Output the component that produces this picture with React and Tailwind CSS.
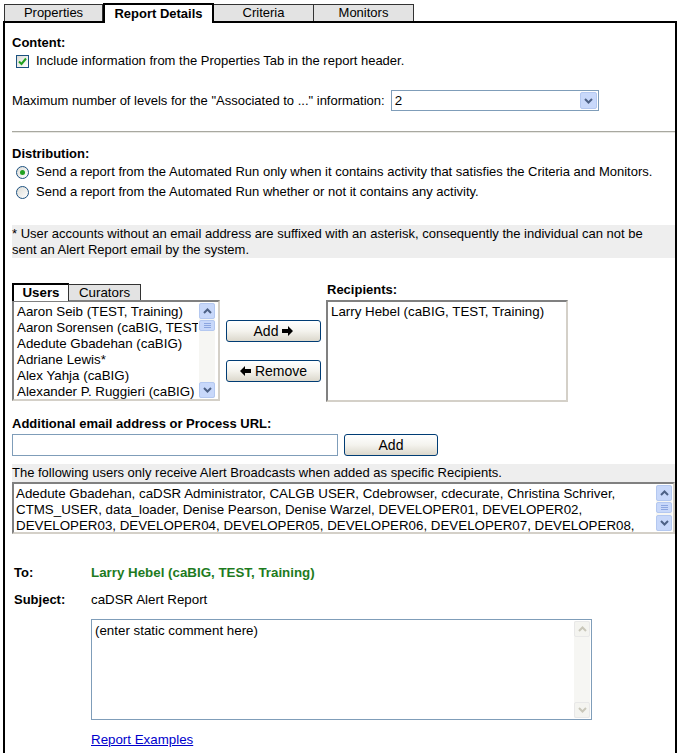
import React from "react";

function Chevron({ up, color = "#4d6185" }) {
  return (
    <svg width="9" height="6" viewBox="0 0 9 6">
      <path
        d={up ? "M1 5 L4.5 1.5 L8 5" : "M1 1 L4.5 4.5 L8 1"}
        stroke={color}
        strokeWidth="2"
        fill="none"
      />
    </svg>
  );
}

function SBtn({ up, disabled }) {
  return (
    <div
      className={
        disabled
          ? "h-[16px] w-full flex items-center justify-center rounded-[2px] border border-[#e8e8e8] bg-[#f4f4f0]"
          : "h-[16px] w-full flex items-center justify-center rounded-[2px] border border-[#b4c8f0] bg-[#c8d8fa]"
      }
    >
      <Chevron up={up} color={disabled ? "#c9c7ba" : "#4d6185"} />
    </div>
  );
}

function ScrollBar({ disabled, thumb = true }) {
  return (
    <div className="w-[16px] h-full flex flex-col bg-[#f6f6f3]">
      <SBtn up disabled={disabled} />
      <div className="flex-1 relative">
        {thumb && !disabled && (
          <div className="absolute left-0 right-0 top-[1px] h-[11px] rounded-[2px] border border-[#b4c8f0] bg-[#c8d8fa] flex flex-col items-center justify-center gap-[1px]">
            <div className="w-[7px] h-[1px] bg-[#8ca6e0]" />
            <div className="w-[7px] h-[1px] bg-[#8ca6e0]" />
            <div className="w-[7px] h-[1px] bg-[#8ca6e0]" />
          </div>
        )}
      </div>
      <SBtn disabled={disabled} />
    </div>
  );
}

function Arrow({ left }) {
  return (
    <svg width="11" height="10" viewBox="0 0 11 10" className="inline-block">
      <path
        d={
          left
            ? "M0 5 L5 0 L5 3 L11 3 L11 7 L5 7 L5 10 Z"
            : "M11 5 L6 0 L6 3 L0 3 L0 7 L6 7 L6 10 Z"
        }
        fill="#000"
      />
    </svg>
  );
}

function XPButton({ children, className }) {
  return (
    <div
      className={
        "flex items-center justify-center gap-[4px] rounded-[3px] border border-[#003c74] bg-gradient-to-b from-[#ffffff] via-[#f4f3ee] to-[#dcd8cc] text-[14px] leading-[16px] " +
        className
      }
    >
      {children}
    </div>
  );
}

const users = [
  "Aaron Seib (TEST, Training)",
  "Aaron Sorensen (caBIG, TEST, Training)",
  "Adedute Gbadehan (caBIG)",
  "Adriane Lewis*",
  "Alex Yahja (caBIG)",
  "Alexander P. Ruggieri (caBIG)",
];

export default function App() {
  return (
    <div className="w-[688px] h-[753px] bg-white overflow-hidden relative text-[13px] leading-[16px] text-black font-['Liberation_Sans',Arial,sans-serif]">
      {/* Tabs */}
      <div className="flex items-end pl-[4px] pt-[3px]">
        <div className="w-[99px] h-[17px] bg-[#e3e3e3] border border-[#333] border-b-0 text-center leading-[16px]">
          Properties
        </div>
        <div className="relative z-10 w-[111px] h-[20px] -mb-[2px] bg-white border-2 border-black border-b-0 text-center font-bold leading-[17px]">
          Report Details
        </div>
        <div className="w-[100px] h-[17px] bg-[#e3e3e3] border border-[#333] border-b-0 border-l-0 text-center leading-[16px]">
          Criteria
        </div>
        <div className="w-[100px] h-[17px] bg-[#e3e3e3] border border-[#333] border-b-0 border-l-0 text-center leading-[16px]">
          Monitors
        </div>
      </div>

      {/* Panel */}
      <div className="ml-[3px] w-[674px] h-[760px] border-2 border-black pl-[7px] pt-[12px] flex flex-col">
        <div className="font-bold">Content:</div>
        <div className="mt-[2px] flex items-center">
          <div className="ml-[4px] w-[13px] h-[13px] border border-[#1c5180] bg-gradient-to-br from-[#dcdcd6] to-[#ffffff] flex items-center justify-center">
            <svg width="9" height="9" viewBox="0 0 9 9">
              <path d="M1 4.5 L3.5 7 L8 1.5" stroke="#21a121" strokeWidth="2" fill="none" />
            </svg>
          </div>
          <span className="ml-[7px]">Include information from the Properties Tab in the report header.</span>
        </div>

        <div className="mt-[21px] flex items-center h-[21px]">
          <span>Maximum number of levels for the "Associated to ..." information:</span>
          <div className="ml-[6px] w-[208px] h-[21px] border border-[#7f9db9] flex items-center">
            <span className="flex-1 pl-[3px] text-[13.33px]">2</span>
            <div className="w-[17px] h-[17px] mr-[1px] rounded-[2px] border border-[#b4c8f0] bg-[#c8d8fa] flex items-center justify-center">
              <Chevron />
            </div>
          </div>
        </div>

        <div className="mt-[20px] h-[2px] border-t border-[#a8a8a0] border-b border-b-[#e8e8e4]" />

        <div className="mt-[13px] font-bold">Distribution:</div>
        <div className="mt-[2px] flex items-center h-[16px]">
          <div className="ml-[4px] w-[13px] h-[13px] rounded-full border border-[#1c5180] bg-gradient-to-br from-[#dcdcd6] to-[#ffffff] flex items-center justify-center">
            <div className="w-[5px] h-[5px] rounded-full bg-[#21a121]" />
          </div>
          <span className="ml-[7px]">
            Send a report from the Automated Run only when it contains activity that satisfies the Criteria and Monitors.
          </span>
        </div>
        <div className="mt-[4px] flex items-center h-[16px]">
          <div className="ml-[4px] w-[13px] h-[13px] rounded-full border border-[#1c5180] bg-gradient-to-br from-[#dcdcd6] to-[#ffffff]" />
          <span className="ml-[7px]">Send a report from the Automated Run whether or not it contains any activity.</span>
        </div>

        <div className="mt-[25px] bg-[#eeeeee] pt-[1px] h-[33px]">
          * User accounts without an email address are suffixed with an asterisk, consequently the individual can not be
          <br />
          sent an Alert Report email by the system.
        </div>

        {/* Users / Recipients */}
        <div className="mt-[24px] flex">
          <div className="w-[208px] flex flex-col">
            <div className="flex items-end h-[18px]">
              <div className="relative z-10 w-[57px] h-[18px] -mb-[1px] bg-white border-2 border-black border-b-0 border-r border-r-[#333] text-center font-bold text-[13.33px] leading-[16px]">
                Users
              </div>
              <div className="w-[72px] h-[16px] bg-[#e3e3e3] border border-[#333] border-b-0 border-l-0 text-center text-[13.33px] leading-[15px]">
                Curators
              </div>
            </div>
            <div className="h-[101px] border-2 border-t-[#808080] border-l-[#808080] border-b-[#d4d0c8] border-r-[#d4d0c8] flex">
              <div className="flex-1 overflow-hidden pl-[3px] pt-[2px] text-[13.33px] leading-[16px] whitespace-nowrap">
                {users.map((u) => (
                  <div key={u}>{u}</div>
                ))}
              </div>
              <div className="py-[1px] pr-[3px] pl-[1px] bg-white">
                <ScrollBar />
              </div>
            </div>
          </div>

          <div className="ml-[6px] w-[95px] flex flex-col pt-[38px]">
            <XPButton className="h-[22px]">
              <span>Add</span>
              <Arrow />
            </XPButton>
            <XPButton className="h-[22px] mt-[18px]">
              <Arrow left />
              <span>Remove</span>
            </XPButton>
          </div>

          <div className="ml-[5px] w-[242px] flex flex-col">
            <div className="h-[18px] font-bold pl-[1px] leading-[16px]">Recipients:</div>
            <div className="h-[102px] border-2 border-t-[#808080] border-l-[#808080] border-b-[#d4d0c8] border-r-[#d4d0c8] pl-[3px] pt-[2px] text-[13.33px] leading-[16px]">
              Larry Hebel (caBIG, TEST, Training)
            </div>
          </div>
        </div>

        <div className="mt-[14px] font-bold">Additional email address or Process URL:</div>
        <div className="mt-[2px] flex items-center">
          <div className="w-[326px] h-[22px] border border-[#7f9db9] bg-white" />
          <XPButton className="ml-[6px] w-[94px] h-[22px] -mt-[1px]">Add</XPButton>
        </div>

        <div className="mt-[8px] h-[18px] bg-[#eeeeee] leading-[18px]">
          The following users only receive Alert Broadcasts when added as specific Recipients.
        </div>
        <div className="h-[52px] border-2 border-t-[#808080] border-l-[#808080] border-b-[#d4d0c8] border-r-[#d4d0c8] flex">
          <div className="flex-1 overflow-hidden pl-[2px] pt-[2px] text-[13.33px] leading-[16px] whitespace-nowrap">
            <div>Adedute Gbadehan, caDSR Administrator, CALGB USER, Cdebrowser, cdecurate, Christina Schriver,</div>
            <div>CTMS_USER, data_loader, Denise Pearson, Denise Warzel, DEVELOPER01, DEVELOPER02,</div>
            <div>DEVELOPER03, DEVELOPER04, DEVELOPER05, DEVELOPER06, DEVELOPER07, DEVELOPER08,</div>
          </div>
          <div className="py-[1px] pr-[1px]">
            <ScrollBar />
          </div>
        </div>

        <div className="mt-[31px] flex h-[16px]">
          <div className="w-[79px] pl-[2px] font-bold">To:</div>
          <div className="font-bold text-[#1e7b1e] text-[13.33px]">Larry Hebel (caBIG, TEST, Training)</div>
        </div>
        <div className="mt-[11px] flex h-[16px]">
          <div className="w-[79px] pl-[2px] font-bold">Subject:</div>
          <div className="text-[13.33px]">caDSR Alert Report</div>
        </div>

        <div className="mt-[11px] ml-[79px] w-[501px] h-[101px] border border-[#7f9db9] flex">
          <div className="flex-1 pl-[3px] pt-[3px] text-[13.33px] leading-[16px]">(enter static comment here)</div>
          <div className="py-[1px] pr-[1px]">
            <ScrollBar disabled />
          </div>
        </div>

        <div className="mt-[12px] ml-[79px] text-[13.33px]">
          <span className="text-[#0000cc] underline">Report Examples</span>
        </div>
      </div>
    </div>
  );
}
